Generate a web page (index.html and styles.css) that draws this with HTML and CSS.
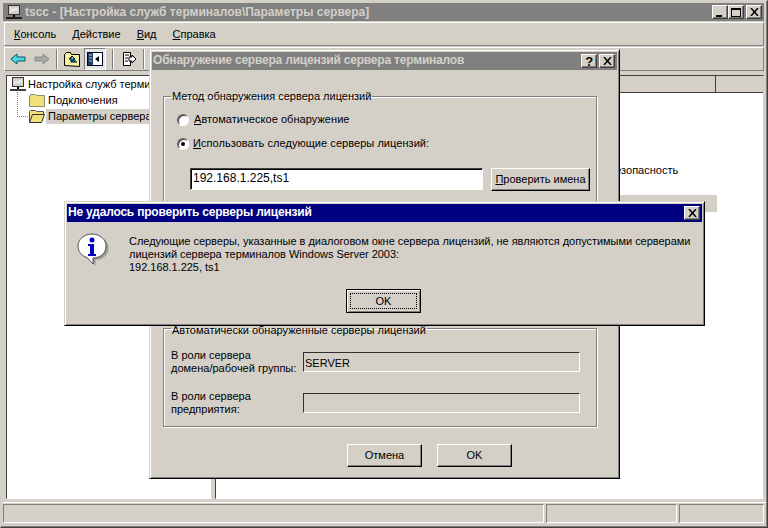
FILE: index.html
```html
<!DOCTYPE html>
<html lang="ru">
<head>
<meta charset="utf-8">
<title>tscc</title>
<link rel="stylesheet" href="styles.css">
</head>
<body>
<div class="app">
  <header class="titlebar inactive">
    <svg class="t-icon" width="16" height="16" viewBox="0 0 16 16"><rect x="2.500" y="1.500" width="11" height="9" fill="#d4d0c8" stroke="#333"/><path d="M4 8l2-3 2 2 2-3 2 3" fill="none" stroke="#fff"/><path d="M8 11v2" stroke="#000" stroke-width="2"/><path d="M0 14h16" stroke="#000" stroke-width="1.500"/></svg>
    <span class="title-text">tscc - [Настройка служб терминалов\Параметры сервера]</span>
    <div class="caps main-caps">
      <span class="cap"><i class="min"></i></span>
      <span class="cap"><i class="max"></i></span>
      <span class="cap gap"><svg width="9" height="8" viewBox="0 0 9 8"><path d="M1 0l7 8M8 0L1 8" stroke="#000" stroke-width="1.500"/></svg></span>
    </div>
  </header>
  <nav class="menu">
    <span><u>К</u>онсоль</span><span><u>Д</u>ействие</span><span><u>В</u>ид</span><span><u>С</u>правка</span>
  </nav>
  <div class="toolbar">
    <svg class="tb" width="16" height="16" viewBox="0 0 16 16"><path d="M1 8l6-5v3h8v4H7v3z" fill="#4fd6e0" stroke="#06566a"/></svg>
    <svg class="tb fwd" width="16" height="16" viewBox="0 0 16 16"><path d="M15 8L9 3v3H1v4h8v3z" fill="#a8a8a2" stroke="#8a8a86"/></svg>
    <i class="sep"></i>
    <svg class="tb" width="18" height="16" viewBox="0 0 18 16"><path d="M1.500 14.500v-11l2-2h4l1 2h8v12z" fill="#f7f0a0" stroke="#000"/><path d="M9 5l-3 3h2v3h6M9 5l3 3h-2v2" fill="#0a8a8a" stroke="#004"/></svg>
    <span class="tb-on"><svg width="16" height="14" viewBox="0 0 16 14"><rect x=".5" y=".5" width="15" height="13" fill="#fff" stroke="#003"/><rect x="1" y="1" width="5" height="12" fill="#223a66"/><path d="M12 4L8 7l4 3z" fill="#000"/><path d="M2 3h3M2 6h3M2 9h3" stroke="#9cf"/></svg></span>
    <i class="sep"></i>
    <svg class="tb doc" width="16" height="16" viewBox="0 0 16 16"><path d="M2.500 1.500h7v13h-7z" fill="#fff" stroke="#000"/><path d="M4 4h4M4 7h3M4 10h3" stroke="#000"/><path d="M8 6h3V4l4 4-4 4v-2H8z" fill="#fff" stroke="#000"/></svg>
    <i class="sep"></i>
  </div>
  <main class="content">
    <section class="tree">
      <div class="node root">
        <svg width="16" height="16" viewBox="0 0 16 16"><rect x="2.500" y="1.500" width="11" height="9" fill="#d4d0c8" stroke="#333"/><path d="M4 8l2-3 2 2 2-3 2 3" fill="none" stroke="#fff"/><path d="M8 11v2" stroke="#000" stroke-width="2"/><path d="M0 14h16" stroke="#000" stroke-width="1.500"/></svg>
        <span>Настройка служб терминалов</span>
      </div>
      <div class="node child">
        <svg width="16" height="14" viewBox="0 0 16 14"><path d="M.5 13.500v-10l1-2h5l1 1h8v11z" fill="#efe07a" stroke="#8a8a70"/></svg>
        <span>Подключения</span>
      </div>
      <div class="node child">
        <svg width="16" height="14" viewBox="0 0 16 14"><path d="M.5 13.500v-11l1-1h5l1 1h7v3" fill="#efe07a" stroke="#555"/><path d="M.5 13.500l3-8h12l-3 8z" fill="#efe07a" stroke="#333"/></svg>
        <span class="sel">Параметры сервера</span>
      </div>
    </section>
    <section class="list">
      <div class="list-head"><span class="col-a"></span><span class="col-b"></span></div>
      <div class="list-body">
        <div class="row row-text">Безопасность</div>
        <div class="row row-sel"></div>
      </div>
    </section>
  </main>
  <footer class="status"><span class="s1"></span><span class="s2"></span><span class="s3"></span></footer>
</div>

<div class="window lic">
  <div class="dlg-title inactive">
    <span class="title-text">Обнаружение сервера лицензий сервера терминалов</span>
    <div class="caps">
      <span class="cap q">?</span>
      <span class="cap"><svg width="9" height="8" viewBox="0 0 9 8"><path d="M1 0l7 8M8 0L1 8" stroke="#000" stroke-width="1.500"/></svg></span>
    </div>
  </div>
  <fieldset class="group g1">
    <legend>Метод обнаружения сервера лицензий</legend>
    <label class="radio"><i class="rb"></i><span><u>А</u>втоматическое обнаружение</span></label>
    <label class="radio second"><i class="rb on"></i><span><u>И</u>спользовать следующие серверы лицензий:</span></label>
    <div class="edit-row">
      <div class="edit">192.168.1.225,ts1</div>
      <button class="btn check"><u>П</u>роверить имена</button>
    </div>
  </fieldset>
  <fieldset class="group g2">
    <legend>Автоматически обнаруженные серверы лицензий</legend>
    <div class="ro-row"><span class="ro-label">В роли сервера<br>домена/рабочей группы:</span><div class="ro">SERVER</div></div>
    <div class="ro-row"><span class="ro-label">В роли сервера<br>предприятия:</span><div class="ro"></div></div>
  </fieldset>
  <div class="dlg-actions">
    <button class="btn act">Отмена</button>
    <button class="btn act">OK</button>
  </div>
</div>

<div class="window err">
  <div class="dlg-title active">
    <span class="title-text">Не удалось проверить серверы лицензий</span>
    <div class="caps"><span class="cap"><svg width="9" height="8" viewBox="0 0 9 8"><path d="M1 0l7 8M8 0L1 8" stroke="#000" stroke-width="1.500"/></svg></span></div>
  </div>
  <div class="err-body">
    <svg class="info" width="32" height="34" viewBox="0 0 32 34"><path d="M16 2C8 2 2 7.500 2 14c0 6 4 10 9 11.500l6 6.500v-6C25 25.500 30 21 30 14 30 7.500 24 2 16 2z" fill="#9a9a94" transform="translate(1.500 1)"/><path d="M15 1C7 1 1 6.500 1 13c0 6 4 10 9 11.500l6 6.500v-6C24 24.500 29 20 29 13 29 6.500 23 1 15 1z" fill="#fff" stroke="#555"/><circle cx="15" cy="7" r="2.500" fill="#0000c8"/><path d="M11 11h6v10h2v2h-8v-2h2v-8h-2z" fill="#0000c8"/></svg>
    <p class="err-text">Следующие серверы, указанные в диалоговом окне сервера лицензий, не являются допустимыми серверами<br>лицензий сервера терминалов Windows Server 2003:<br>192.168.1.225, ts1</p>
  </div>
  <div class="err-actions"><button class="btn default"><span>OK</span></button></div>
</div>
</body>
</html>
```
FILE: styles.css
```css
* { box-sizing: border-box; }
html, body { margin: 0; padding: 0; }
body {
  width: 768px; height: 528px; overflow: hidden; position: relative;
  background: #d4d0c8; color: #000;
  font: 11px/13px "Liberation Sans", Arial, sans-serif;
}
.app {
  width: 768px; height: 528px; display: flex; flex-direction: column;
  border: 1px solid #d4d0c8; border-right-color: #404040; border-bottom-color: #404040;
  padding: 2px 1px 3px 2px; box-shadow: inset -1px -1px 0 #808080;
}
.inactive { background: #808080; color: #d4d0c8; }
.active { background: #000080; color: #fff; }
.title-text { font-weight: 700; white-space: nowrap; }
.titlebar {
  height: 18px; flex: none; display: flex; align-items: center; padding: 0 2px 0 3px; gap: 3px;
  margin-right: 2px;
}
.titlebar .title-text { font-size: 12px; }
.caps { margin-left: auto; display: flex; }
.cap {
  width: 16px; height: 14px; background: #d4d0c8; display: flex; align-items: center; justify-content: center;
  border: 1px solid; border-color: #fff #404040 #404040 #fff; box-shadow: inset -1px -1px 0 #808080;
  color: #000; font-weight: 700; font-size: 13px;
}
.cap + .cap { margin-left: 2px; }
.main-caps .cap + .cap { margin-left: 0; }
.main-caps .cap.gap { margin-left: 2px; }
.min { width: 6px; height: 2px; background: #000; margin: 7px 3px 0 0; }
.max { width: 10px; height: 9px; border: 1px solid #000; border-top-width: 2px; }
.menu {
  height: 24px; flex: none; margin: 1px 2px 0 1px; display: flex; align-items: center; padding-left: 9px; gap: 16px;
  border: 1px solid; border-color: #fff #808080 #808080 #fff;
}
.toolbar {
  height: 24px; flex: none; margin: 1px 2px 0 1px; display: flex; align-items: center; padding-left: 5px; gap: 3px;
  border: 1px solid; border-color: #fff #808080 #808080 #fff;
}
.tb { flex: none; }
.fwd { margin-left: 5px; }
.doc { margin-left: 2px; }
.sep { width: 2px; height: 20px; margin: 0 2px 0 3px; border-left: 1px solid #808080; border-right: 1px solid #fff; }
.tb-on { width: 22px; height: 22px; display: flex; align-items: center; justify-content: center; background: #e8e6e0;
  border: 1px solid; border-color: #808080 #fff #fff #808080; }
.content { flex: 1; min-height: 0; display: flex; margin: 4px 2px 0 3px; }
.tree {
  width: 206px; flex: none; background: #fff; border: 1px solid; border-color: #404040 #d4d0c8 #fff #404040;
  padding: 0 0 0 3px; overflow: hidden; position: relative;
}
.tree::before {
  content: ""; position: absolute; left: 10px; top: 16px; width: 10px; height: 24px;
  border-left: 1px dotted #808080; border-bottom: 1px dotted #808080;
}
.node { height: 16px; display: flex; align-items: center; gap: 3px; white-space: nowrap; position: relative; }
.root { gap: 2px; }
.child { padding-left: 19px; }
.sel { background: #d4d0c8; padding: 1px 2px; margin-left: -2px; }
.list {
  flex: 1; margin-left: 3px; background: #fff; border: 1px solid; border-color: #404040 #d4d0c8 #fff #404040;
  display: flex; flex-direction: column;
}
.list-head { height: 17px; flex: none; background: #d4d0c8; border-bottom: 1px solid #404040; display: flex; justify-content: flex-end; }
.col-b { width: 48px; border-left: 1px solid #404040; }
.list-body { flex: 1; padding-top: 71px; }
.row { height: 17px; white-space: nowrap; }
.row-text { height: 31px; padding-left: 392px; }
.row-sel { width: 501px; background: #d4d0c8; }
.status { height: 22px; flex: none; margin: 3px 0 0 0; display: flex; gap: 2px; background: #d4d0c8; padding-top: 1px; border-top: 1px solid #fff; }
.status span { border: 1px solid; border-color: #808080 #fff #fff #808080; height: 19px; }
.s1 { width: 541px; } .s2 { width: 131px; } .s3 { flex: 1; margin-right: 2px; }

.window {
  position: absolute; background: #d4d0c8; border: 1px solid; border-color: #d4d0c8 #000 #000 #d4d0c8;
  box-shadow: inset 1px 1px 0 #fff, inset -1px -1px 0 #808080; padding: 2px;
}
.lic { left: 149px; top: 49px; width: 471px; height: 430px; }
.err { left: 64px; top: 201px; width: 641px; height: 125px; }
.dlg-title { height: 18px; display: flex; align-items: center; padding: 0 2px 2px 1px; font-size: 12px; letter-spacing: -.2px; }
.dlg-title .caps { margin-top: 2px; }
.group { position: absolute; margin: 0; border: 1px solid #808080; box-shadow: inset 1px 1px 0 #fff, 1px 1px 0 #fff; padding: 0; left: 13px; width: 434px; }
legend { margin-left: 7px; padding: 0 1px; line-height: 13px; }
.g1 { top: 40px; height: 200px; }
.g2 { top: 272px; height: 105px; }
.g2 legend { position: relative; top: 2px; }
.radio { display: flex; align-items: center; gap: 5px; margin: 10px 0 0 13px; letter-spacing: .05px; }
.radio.second { margin-top: 11px; gap: 4px; }
.rb { width: 12px; height: 12px; border-radius: 50%; background: #fff; border: 1px solid; border-color: #606060 #fff #fff #606060; box-shadow: inset 1px 1px 0 #404040; display: flex; align-items: center; justify-content: center; flex: none; }
.rb.on::after { content: ""; width: 4px; height: 4px; border-radius: 50%; background: #000; }
.edit-row { display: flex; gap: 8px; margin: 18px 0 0 26px; }
.edit { width: 293px; height: 22px; background: #fff; border: 1px solid; border-color: #404040 #fff #fff #404040; padding: 3px 2px; font-size: 12px; box-shadow: inset 1px 1px 0 #000; }
.btn { background: #d4d0c8; border: 1px solid; border-color: #fff #000 #000 #fff; box-shadow: inset -1px -1px 0 #808080; font: inherit; padding: 0; color: #000; white-space: nowrap; }
.check { width: 99px; height: 23px; }
.ro-row { display: flex; align-items: center; margin: 0 0 0 7px; height: 41px; }
.ro-row:first-of-type { margin-top: 6px; }
.ro-label { width: 132px; line-height: 13px; flex: none; white-space: nowrap; }
.ro { width: 277px; height: 20px; border: 1px solid; border-color: #303030 #fff #fff #303030; padding: 5px 1px 0; line-height: 11px; }
.dlg-actions { position: absolute; top: 394px; left: 197px; display: flex; gap: 15px; }
.act { width: 75px; height: 23px; }
.err-body { display: flex; padding: 11px 0 0 10px; }
.info { flex: none; }
.err-text { margin: 2px 0 0 20px; font-size: 11px; letter-spacing: -.03px; white-space: nowrap; }
.err-actions { position: absolute; top: 87px; left: 281px; }
.default { width: 75px; height: 24px; border-color: #000; box-shadow: inset 1px 1px 0 #fff, inset -1px -1px 0 #808080; padding: 3px; }
.default span { display: block; height: 100%; border: 1px dotted #000; line-height: 14px; }
```
